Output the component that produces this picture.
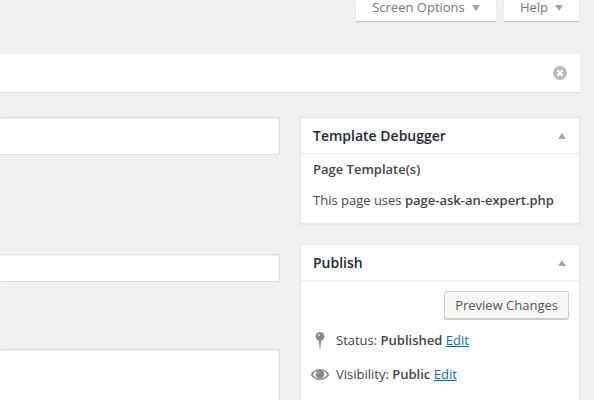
<script>
</script>

<div class="wrap">
    <div class="screen-meta">
        <button class="tab">Screen Options <span class="down"></span></button>
        <button class="tab help">Help <span class="down"></span></button>
    </div>

    <div class="notice">
        <svg class="dismiss" width="14" height="14" viewBox="0 0 14 14">
            <circle cx="7" cy="7" r="7" fill="#b4b9be" />
            <path d="M4.300 4.300l5.400 5.400M9.700 4.300l-5.400 5.400" stroke="#fff" stroke-width="2.300" />
        </svg>
    </div>

    <div class="columns">
        <div class="main">
            <div class="field title"></div>
            <div class="field slug"></div>
            <div class="field editor"></div>
        </div>

        <div class="side">
            <div class="box debugger">
                <div class="box-head">
                    <h2>Template Debugger</h2>
                    <span class="up"></span>
                </div>
                <div class="box-body">
                    <div class="label">Page Template(s)</div>
                    <p>This page uses <b>page-ask-an-expert.php</b></p>
                </div>
            </div>

            <div class="box publish">
                <div class="box-head">
                    <h2>Publish</h2>
                    <span class="up"></span>
                </div>
                <div class="actions">
                    <button class="preview">Preview Changes</button>
                </div>
                <div class="row status">
                    <svg class="icon" width="20" height="20" viewBox="0 0 20 20">
                        <circle cx="10" cy="6.300" r="4.400" fill="#82878c" />
                        <circle cx="9" cy="5" r="1.200" fill="#c4c7ca" />
                        <path d="M9 9.500h2L10.500 18h-1z" fill="#82878c" />
                    </svg>
                    <span>Status: <b>Published</b> <a href="#status">Edit</a></span>
                </div>
                <div class="row visibility">
                    <svg class="icon" width="20" height="20" viewBox="0 0 20 20">
                        <path fill-rule="evenodd" fill="#82878c" d="M.7 10.500C2.900 6.900 6.200 5 10 5s7.100 1.900 9.300 5.500C17.100 14.100 13.800 16 10 16S2.900 14.100.7 10.500zM2.600 10.500C4.500 13.200 7 14.700 10 14.700s5.500-1.500 7.400-4.200C15.500 7.800 13 6.300 10 6.300S4.500 7.800 2.600 10.500z" />
                        <circle cx="10" cy="10.300" r="4.200" fill="#82878c" />
                        <circle cx="8.300" cy="8.800" r="1" fill="#c4c7ca" />
                    </svg>
                    <span>Visibility: <b>Public</b> <a href="#visibility">Edit</a></span>
                </div>
            </div>
        </div>
    </div>
</div>

<style>
    :global(body) {
        background: #f1f1f1;
        overflow: hidden;
    }

    .wrap {
        height: 400px;
        overflow: hidden;
        padding-right: 14px;
        font-family: "Open Sans", sans-serif;
        font-size: 13px;
        line-height: 1.4;
        color: #444;
    }

    .screen-meta {
        display: flex;
        justify-content: flex-end;
        gap: 8px;
        height: 21px;
        margin-right: 1px;
    }

    .tab {
        display: flex;
        align-items: center;
        justify-content: center;
        gap: 7px;
        width: 140px;
        height: 21px;
        padding: 0 0 6px;
        border: none;
        background: #fff;
        box-shadow: 0 1px 1px rgba(0, 0, 0, 0.2);
        font: inherit;
        line-height: 15px;
        color: #72777c;
    }

    .tab.help {
        width: 75px;
    }

    .down {
        width: 0;
        height: 0;
        border-left: 4.5px solid transparent;
        border-right: 4.5px solid transparent;
        border-top: 6px solid #a0a5aa;
    }

    .notice {
        display: flex;
        align-items: center;
        justify-content: flex-end;
        height: 38px;
        margin-top: 33px;
        padding-right: 13px;
        background: #fff;
        box-shadow: 0 1px 1px rgba(0, 0, 0, 0.08);
    }

    .dismiss {
        display: block;
    }

    .columns {
        display: flex;
        gap: 20px;
        margin-top: 25px;
    }

    .main {
        flex: none;
        width: 280px;
    }

    .field {
        box-sizing: border-box;
        background: #fff;
        border: 1px solid #ddd;
        border-left: none;
        box-shadow: inset 0 1px 2px rgba(0, 0, 0, 0.07);
    }

    .title {
        height: 38px;
    }

    .slug {
        height: 28px;
        margin-top: 99px;
    }

    .editor {
        height: 200px;
        margin-top: 67px;
    }

    .side {
        flex: 1;
    }

    .box {
        box-sizing: border-box;
        background: #fff;
        border: 1px solid #e5e5e5;
        box-shadow: 0 1px 1px rgba(0, 0, 0, 0.04);
    }

    .debugger {
        height: 107px;
    }

    .publish {
        margin-top: 20px;
        height: 200px;
    }

    .box-head {
        display: flex;
        align-items: center;
        justify-content: space-between;
        height: 35px;
        padding: 0 12px;
        border-bottom: 1px solid #eee;
    }

    h2 {
        margin: 0;
        font-size: 14px;
        font-weight: 600;
        line-height: 1.4;
        color: #23282d;
    }

    .up {
        width: 0;
        height: 0;
        margin-right: 1.5px;
        border-left: 4.5px solid transparent;
        border-right: 4.5px solid transparent;
        border-bottom: 6px solid #a0a5aa;
    }

    .box-body {
        padding: 6px 12px;
    }

    .label {
        font-weight: 600;
    }

    p {
        margin: 13px 0 0;
    }

    b {
        font-weight: 600;
    }

    .actions {
        display: flex;
        justify-content: flex-end;
        padding: 10px 10px 0;
    }

    .preview {
        height: 28px;
        padding: 1px 10px 0;
        border: 1px solid #ccc;
        border-radius: 3px;
        background: #f7f7f7;
        box-shadow: 0 1px 0 #ccc;
        font: inherit;
        color: #555;
    }

    .row {
        display: flex;
        align-items: center;
        gap: 6px;
        padding-left: 9px;
        height: 18px;
    }

    .status {
        margin-top: 12px;
    }

    .visibility {
        margin-top: 16px;
    }

    .icon {
        flex: none;
    }

    a {
        color: #0073aa;
    }
</style>
